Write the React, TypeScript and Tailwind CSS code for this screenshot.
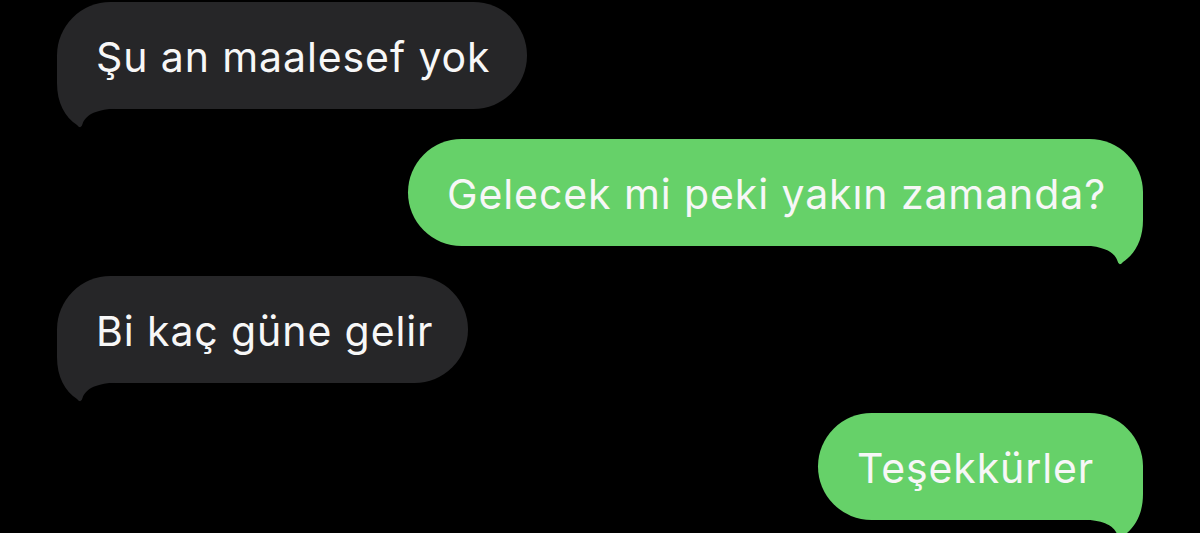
import React from "react";

interface Message {
    text: string;
    mine: boolean;
    width: string;
}

const messages: Message[] = [
    { text: "Şu an maalesef yok", mine: false, width: "w-[470px]" },
    { text: "Gelecek mi peki yakın zamanda?", mine: true, width: "w-[735px]" },
    { text: "Bi kaç güne gelir", mine: false, width: "w-[411px]" },
    { text: "Teşekkürler", mine: true, width: "w-[325px]" },
];

function Tail({ mine }: { mine: boolean }) {
    return (
        <svg
            width="62"
            height="75"
            viewBox="0 0 62 75"
            className={`absolute bottom-[-21px] ${mine ? "right-0 -scale-x-100" : "left-0"}`}
        >
            <path
                d="M0 0 L0 28 C0 48 8 62 20 70 Q24 75 25.5 69 C28.5 61 36 55 58 53.5 L62 53.5 L62 0 Z"
                fill={mine ? "#66d169" : "#262628"}
            />
        </svg>
    );
}

export default function App() {
    return (
        <div
            className="w-[1200px] h-[533px] bg-black overflow-hidden flex flex-col pt-[2px] px-[57px] gap-[30px]"
            style={{ fontFamily: "Inter, 'Liberation Sans', sans-serif" }}
        >
            {messages.map((m, i) => (
                <div key={i} className={`flex ${m.mine ? "justify-end" : "justify-start"}`}>
                    <div
                        className={`relative ${m.width} h-[107px] rounded-full flex items-center pl-[39px] ${
                            m.mine ? "bg-[#66d169]" : "bg-[#262628]"
                        }`}
                    >
                        <Tail mine={m.mine} />
                        <span className="relative text-[41px] leading-none text-[#f7f7f7] tracking-[0.9px] pt-[4px] whitespace-nowrap">
                            {m.text}
                        </span>
                    </div>
                </div>
            ))}
        </div>
    );
}
